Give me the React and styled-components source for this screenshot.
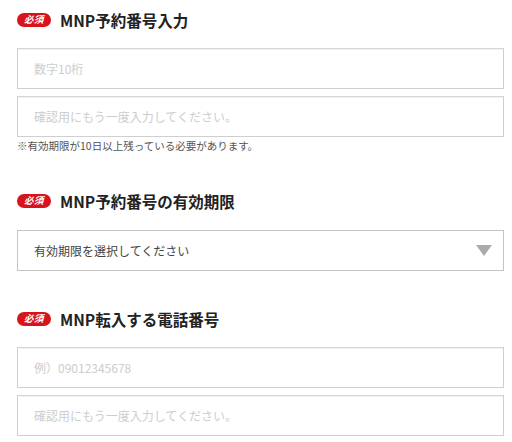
import React from "react";
import styled, { createGlobalStyle } from "styled-components";

const Global = createGlobalStyle`
  html, body { margin: 0; padding: 0; background: #fff; }
  body { font-family: "Noto Sans CJK JP", "Noto Sans", sans-serif; color: #222; }
  * { box-sizing: border-box; }
`;

const Page = styled.div`
  display: flex;
  flex-direction: column;
  padding: 10px 8px 0 17px;
  width: 512px;
`;

const Section = styled.section`
  display: flex;
  flex-direction: column;
  margin-top: ${(p) => p.$top || 0}px;
`;

const TitleRow = styled.div`
  display: flex;
  align-items: center;
  height: 20px;
  gap: 9px;
  margin-bottom: ${(p) => p.$gap || 18}px;
`;

const Badge = styled.span`
  display: inline-flex;
  align-items: center;
  justify-content: center;
  width: 34px;
  height: 14px;
  border-radius: 7px;
  background: #d7141c;
  color: #fff;
  font-size: 9.5px;
  font-style: italic;
  font-weight: 700;
  line-height: 1;
  letter-spacing: 0.5px;
`;

const Title = styled.h2`
  margin: 0;
  font-size: 15.5px;
  font-weight: 700;
  color: #222;
  line-height: 20px;
`;

const Fields = styled.div`
  display: flex;
  flex-direction: column;
  gap: 7px;
`;

const TextInput = styled.input`
  width: 487px;
  height: 41px;
  border: 1px solid #cfcfcf;
  border-top-color: #d6d6d6;
  box-shadow: inset 0 1px 1px rgba(0, 0, 0, 0.06);
  padding: 0 16px;
  font-family: "Noto Sans CJK JP", sans-serif;
  font-size: 12px;
  color: #333;
  outline: none;
  background: #fff;
  &::placeholder { color: #cdcdcd; }
`;

const Note = styled.p`
  margin: 2px 0 0;
  font-size: 10.5px;
  line-height: 14px;
  color: #555;
`;

const SelectWrap = styled.div`
  position: relative;
  width: 487px;
  height: 41px;
`;

const Select = styled.select`
  appearance: none;
  -webkit-appearance: none;
  width: 100%;
  height: 100%;
  border: 1px solid #c4c4c4;
  border-radius: 0;
  padding: 0 16px;
  font-family: "Noto Sans CJK JP", sans-serif;
  font-size: 12px;
  color: #444;
  background: #fff;
  outline: none;
`;

const Arrow = styled.svg`
  position: absolute;
  right: 12px;
  top: 15px;
  pointer-events: none;
`;

export default function App() {
  return (
    <>
      <Global />
      <Page>
        <Section>
          <TitleRow>
            <Badge>必須</Badge>
            <Title>MNP予約番号入力</Title>
          </TitleRow>
          <Fields>
            <TextInput placeholder="数字10桁" />
            <TextInput placeholder="確認用にもう一度入力してください。" />
          </Fields>
          <Note>※有効期限が10日以上残っている必要があります。</Note>
        </Section>

        <Section $top={38}>
          <TitleRow $gap={19}>
            <Badge>必須</Badge>
            <Title>MNP予約番号の有効期限</Title>
          </TitleRow>
          <SelectWrap>
            <Select defaultValue="">
              <option value="">有効期限を選択してください</option>
            </Select>
            <Arrow width="16" height="11" viewBox="0 0 16 11">
              <polygon points="0,0 16,0 8,11" fill="#ababab" />
            </Arrow>
          </SelectWrap>
        </Section>

        <Section $top={38}>
          <TitleRow>
            <Badge>必須</Badge>
            <Title>MNP転入する電話番号</Title>
          </TitleRow>
          <Fields>
            <TextInput placeholder="例）09012345678" />
            <TextInput placeholder="確認用にもう一度入力してください。" />
          </Fields>
        </Section>
      </Page>
    </>
  );
}
